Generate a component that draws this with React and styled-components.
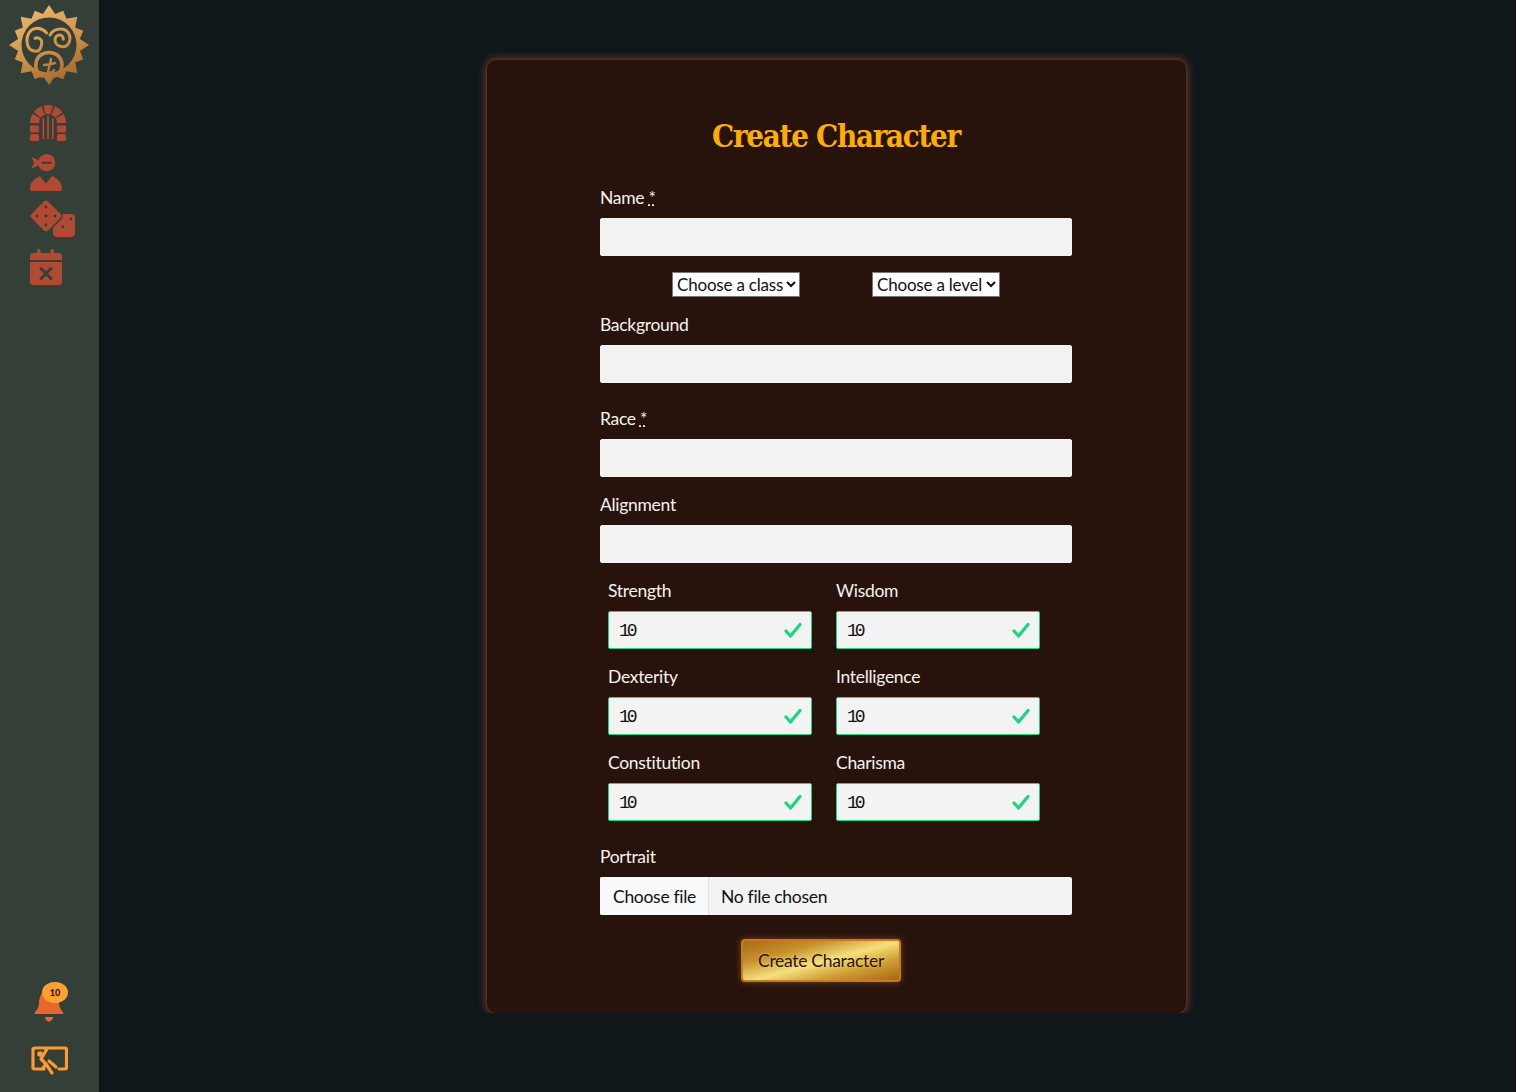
import React from "react"
import styled, { createGlobalStyle } from "styled-components"

const GlobalStyle = createGlobalStyle`
  html, body {
    margin: 0;
    height: 100%;
    background: #10171a;
    font-family: "Lato", "Noto Sans", sans-serif;
  }
  * { box-sizing: border-box; }
`

/*
 * Styles
 */

const Page = styled.div`
  display: flex;
  height: 1092px;
  overflow: hidden;
`

const Sidebar = styled.aside`
  display: flex;
  flex: 0 0 99px;
  flex-direction: column;
  background: #343f38;
  padding: 3px 0 16px;
`

const Logo = styled.svg`
  display: block;
  width: 90px;
  height: 90px;
  margin-left: 4px;
`

const Nav = styled.nav`
  display: flex;
  flex-direction: column;
  gap: 12px;
  margin-top: 12px;
  padding-left: 30px;
`

const NavIcon = styled.svg`
  display: block;
  width: 46px;
  height: 36px;
  overflow: visible;
`

const BottomIcons = styled.div`
  display: flex;
  flex-direction: column;
  gap: 22px;
  margin-top: auto;
  padding-left: 30px;
`

const BellWrap = styled.div`
  position: relative;
  width: 38px;
  height: 42px;
`

const Badge = styled.span`
  position: absolute;
  top: 0;
  left: 12px;
  display: flex;
  align-items: center;
  justify-content: center;
  width: 26px;
  height: 21px;
  border-radius: 50%;
  background: #ffa033;
  color: #2a1508;
  font-size: 9px;
  font-weight: 900;
`

const Main = styled.main`
  display: flex;
  flex: 1;
  justify-content: center;
  align-items: flex-start;
  padding: 59px 0 0 58px;
`

const Panel = styled.section`
  width: 701px;
  height: 955px;
  padding: 54px 114px 0 113px;
  background: #28130c;
  border: 1px solid #57301f;
  border-radius: 10px;
  box-shadow: 0 0 9px rgba(150, 74, 52, 0.8);
  clip-path: inset(-20px -20px 1px -20px);
`

const Title = styled.h1`
  margin: 0 0 28px;
  color: #ffae00;
  font-family: "DejaVu Serif", "Liberation Serif", serif;
  font-size: 31px;
  font-stretch: condensed;
  font-weight: 700;
  line-height: 44px;
  letter-spacing: -1.3px;
  text-align: center;
`

const Label = styled.label`
  display: block;
  margin-bottom: 9px;
  color: #f5f2ee;
  font-size: 17.5px;
  line-height: 23px;
  letter-spacing: -0.3px;
`

const Required = styled.abbr`
  text-decoration: underline dotted;
`

const Field = styled.div`
  margin-bottom: ${(props) => props.$gap || 16}px;
`

const TextInput = styled.input`
  display: block;
  width: 100%;
  height: 38px;
  padding: 0 12px;
  background: #f3f3f3;
  border: 1px solid #f3f3f3;
  border-radius: 2px;
  outline: none;
`

const SelectRow = styled.div`
  display: flex;
  justify-content: center;
  gap: 72px;
  margin-bottom: 16px;
`

const Select = styled.select`
  width: 128px;
  height: 25px;
  padding: 0;
  background: #fff;
  border: 1px solid #777;
  border-radius: 0;
  color: #111;
  font-family: inherit;
  font-size: 17px;
  letter-spacing: -0.2px;
`

const StatGrid = styled.div`
  display: grid;
  grid-template-columns: 204px 204px;
  gap: 16px 24px;
  margin-bottom: 24px;
  padding-left: 8px;
`

const StatBox = styled.div`
  position: relative;
`

const StatInput = styled.input`
  display: block;
  width: 100%;
  height: 38px;
  padding: 1px 10px 0;
  background: #f3f3f3;
  border: 1px solid #19d67f;
  border-radius: 2px;
  color: #111;
  font-family: "Liberation Mono", monospace;
  font-size: 18px;
  letter-spacing: -3px;
  outline: none;
`

const Check = styled.svg`
  position: absolute;
  top: 10px;
  right: 10px;
  width: 18px;
  height: 18px;
  color: #19d67f;
`

const FileBox = styled.label`
  display: flex;
  align-items: center;
  height: 38px;
  background: #f3f3f3;
  border-radius: 2px;
  color: #111;
  font-size: 17.5px;
  letter-spacing: -0.3px;
  overflow: hidden;
`

const HiddenFile = styled.input`
  display: none;
`

const FileButton = styled.span`
  display: flex;
  align-items: center;
  flex: 0 0 109px;
  height: 100%;
  padding-left: 13px;
  background: #f8f9fa;
  border-right: 1px solid #dee2e6;
`

const FileName = styled.span`
  margin-left: 12px;
`

const SubmitButton = styled.button`
  display: block;
  width: 160px;
  height: 43px;
  margin: 24px 0 0 141px;
  background: linear-gradient(165deg, #a86a14 0%, #c8922c 28%, #f5e07e 52%, #d2a236 72%, #a8660f 100%);
  border: 2px solid #c87a1e;
  border-radius: 4px;
  box-shadow: 0 0 6px rgba(214, 130, 30, 0.45);
  color: #2a1508;
  font-family: inherit;
  font-size: 17.5px;
  letter-spacing: -0.3px;
  text-shadow: 0 0 3px rgba(255, 225, 130, 0.6);
`

/*
 * Icons
 */

const RED = "#b04a32"
const SIDE = "#343f38"

const sunSpikes = () => {
  const points = []
  for (let i = 0; i < 32; i++) {
    const angle = (i * Math.PI) / 16 - Math.PI / 2
    const radius = i % 4 === 0 ? 40 : i % 2 === 0 ? 37 : 31.5
    points.push(`${(45 + radius * Math.cos(angle)).toFixed(1)},${(42 + radius * Math.sin(angle)).toFixed(1)}`)
  }
  return points.join(" ")
}

const LogoMark = () => (
  <Logo viewBox="0 0 90 90">
    <defs>
      <linearGradient id="gold" gradientUnits="userSpaceOnUse" x1="20" y1="0" x2="60" y2="85">
        <stop offset="0" stopColor="#efbd72" />
        <stop offset="0.55" stopColor="#cf9149" />
        <stop offset="1" stopColor="#9c6429" />
      </linearGradient>
    </defs>
    <polygon points={sunSpikes()} fill="url(#gold)" />
    <circle cx="45" cy="42" r="27.5" fill={SIDE} />
    <g fill="none" stroke="url(#gold)" strokeLinecap="round">
      <path
        d="M42.700 30C39 26 35 25 31.500 25.500 26 26 22.500 32 23 38.700 23.500 45 27 48.500 32.700 48.200 36 48 38 43 37.700 38.700 37.500 36 34 34 31 35.300"
        strokeWidth="3"
      />
      <path
        d="M46 32C48 28 52 26 57 26 62 26 66 30 66 35.300 66 40 63 43.700 59.300 43.700 54.500 43.700 51 41 51 37 51 34 53 32 56 32 58 32 59.300 34 59.300 36.300"
        strokeWidth="3"
      />
      <path d="M38 73C33 70 31 66 32 60 33 53 39 49 46 49.500 53 50 58 55 58 62 58 68 54 73 47 74" strokeWidth="3.600" />
      <path d="M47 56c-1 5-3 10-3 16M40 62c3 0 8-1 11-2M45 70c2 0 4-1 5-3" strokeWidth="2.400" />
    </g>
  </Logo>
)

const ArchIcon = () => (
  <NavIcon viewBox="0 0 46 36">
    <path
      d="M4.500 18A13.500 13.500 0 0 1 31.500 18"
      fill="none"
      stroke={RED}
      strokeWidth="9"
      strokeDasharray="7.280 1.500"
    />
    <g fill={RED}>
      <rect x="0" y="20.500" width="9" height="7" rx="1.500" />
      <rect x="0" y="29" width="9" height="7" rx="1.500" />
      <rect x="27" y="20.500" width="9" height="7" rx="1.500" />
      <rect x="27" y="29" width="9" height="7" rx="1.500" />
      <rect x="12.500" y="13" width="1.700" height="21" />
      <rect x="17.200" y="11" width="1.700" height="23" />
      <rect x="21.900" y="13" width="1.700" height="21" />
    </g>
  </NavIcon>
)

const PersonIcon = () => (
  <NavIcon viewBox="0 0 46 36">
    <g fill={RED}>
      <circle cx="16.700" cy="9.700" r="8.600" />
      <path d="M1.500 4l8 3.500v4.500l-8 3.500L4 9.700z" />
      <path d="M0 36C0 29 5 25 10 23l6 7.500 6-7.500c5 2 10 6 10 13 0 1.200-.6 2-1.500 2h-29C.6 38 0 37.200 0 36z" />
    </g>
    <rect x="11.700" y="8.700" width="10" height="2" rx="1" fill={SIDE} />
  </NavIcon>
)

const DiceIcon = () => (
  <NavIcon viewBox="0 0 46 36">
    <rect x="23" y="13" width="22" height="23" rx="4" fill={RED} />
    <circle cx="33" cy="26" r="1.400" fill={SIDE} />
    <circle cx="41" cy="18" r="1.400" fill={SIDE} />
    <rect
      x="3.500"
      y="2.500"
      width="25"
      height="25"
      rx="4"
      fill={RED}
      stroke={SIDE}
      strokeWidth="1.500"
      transform="rotate(45 16 15)"
    />
    <g fill={SIDE}>
      <circle cx="16" cy="6" r="1.400" />
      <circle cx="7" cy="15" r="1.400" />
      <circle cx="16" cy="15" r="1.400" />
      <circle cx="25" cy="15" r="1.400" />
      <circle cx="16" cy="24" r="1.400" />
    </g>
  </NavIcon>
)

const CalendarIcon = () => (
  <NavIcon viewBox="0 0 46 36">
    <g fill={RED}>
      <rect x="7" y="0" width="3.600" height="7" rx="1.500" />
      <rect x="20.400" y="0" width="3.600" height="7" rx="1.500" />
      <path d="M0 11V7c0-1.600 1.200-3 3-3h26c1.800 0 3 1.400 3 3v4z" />
      <path d="M0 13h32v20c0 1.700-1.300 3-3 3H3c-1.700 0-3-1.300-3-3z" />
    </g>
    <path d="M11 19.500l10 10M21 19.500l-10 10" stroke={SIDE} strokeWidth="3" strokeLinecap="round" />
  </NavIcon>
)

const BellIcon = () => (
  <svg width="38" height="42" viewBox="0 0 38 42" style={{ display: "block" }}>
    <path
      d="M19 8c-8 0-9.500 7-10 13-.3 4-1.500 7-4 9-.8.700-.5 2 .7 2h26.600c1.200 0 1.500-1.300.7-2-2.500-2-3.700-5-4-9-.5-6-2-13-10-13z"
      fill="#e8672a"
    />
    <path d="M15 35h8c0 2.200-2 4.500-4 4.500s-4-2.300-4-4.500z" fill="#e8672a" />
  </svg>
)

const ScreenIcon = () => (
  <svg width="38" height="30" viewBox="0 0 38 30" style={{ display: "block" }}>
    <g fill="none" stroke="#ff9a33" strokeWidth="3.200" strokeLinecap="round" strokeLinejoin="round">
      <path d="M14 23H5c-1 0-2-.6-2-1.500V3.500C3 2.600 4 2 5 2h30c1 0 1.500.6 1.500 1.500v18c0 1-.5 1.500-1.500 1.500h-6" />
      <path d="M17 3l-6 10 5 5 6 9M16 18l-3 4M19 15l7 6" />
    </g>
    <circle cx="10" cy="8" r="2.800" fill="#ff9a33" />
  </svg>
)

const CheckIcon = () => (
  <Check viewBox="0 0 18 18">
    <path
      d="M2 10l4.500 5L16 3.500"
      fill="none"
      stroke="currentColor"
      strokeWidth="3.200"
      strokeLinecap="round"
      strokeLinejoin="round"
    />
  </Check>
)

/*
 * Component
 */

const stats = ["Strength", "Wisdom", "Dexterity", "Intelligence", "Constitution", "Charisma"]

const App = () => (
  <Page>
    <GlobalStyle />
    <Sidebar>
      <LogoMark />
      <Nav>
        <ArchIcon />
        <PersonIcon />
        <DiceIcon />
        <CalendarIcon />
      </Nav>
      <BottomIcons>
        <BellWrap>
          <BellIcon />
          <Badge>10</Badge>
        </BellWrap>
        <ScreenIcon />
      </BottomIcons>
    </Sidebar>
    <Main>
      <Panel>
        <Title>Create Character</Title>
        <form>
          <Field>
            <Label>
              Name <Required title="required">*</Required>
            </Label>
            <TextInput />
          </Field>
          <SelectRow>
            <Select defaultValue="">
              <option value="">Choose a class</option>
            </Select>
            <Select defaultValue="">
              <option value="">Choose a level</option>
            </Select>
          </SelectRow>
          <Field $gap={24}>
            <Label>Background</Label>
            <TextInput />
          </Field>
          <Field>
            <Label>
              Race <Required title="required">*</Required>
            </Label>
            <TextInput />
          </Field>
          <Field>
            <Label>Alignment</Label>
            <TextInput />
          </Field>
          <StatGrid>
            {stats.map((stat) => (
              <div key={stat}>
                <Label>{stat}</Label>
                <StatBox>
                  <StatInput defaultValue="10" />
                  <CheckIcon />
                </StatBox>
              </div>
            ))}
          </StatGrid>
          <div>
            <Label>Portrait</Label>
            <FileBox>
              <HiddenFile type="file" />
              <FileButton>Choose file</FileButton>
              <FileName>No file chosen</FileName>
            </FileBox>
          </div>
          <SubmitButton type="button">Create Character</SubmitButton>
        </form>
      </Panel>
    </Main>
  </Page>
)

export default App
